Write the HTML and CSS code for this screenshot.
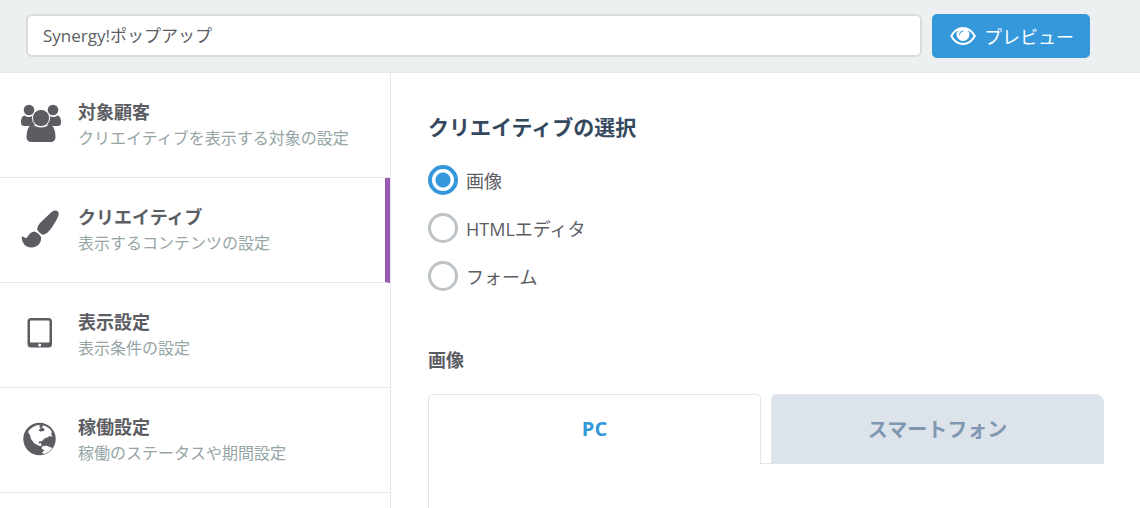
FILE: index.html
```html
<!DOCTYPE html>
<html lang="ja">
<head>
  <meta charset="UTF-8" />
  <meta name="viewport" content="width=device-width, initial-scale=1.0" />
  <title>Synergy!ポップアップ</title>
  <link rel="stylesheet" href="styles.css">
</head>
<body>
  <header class="topbar">
    <input type="text" class="name-input" aria-label="ポップアップ名" value="Synergy!ポップアップ" />
    <button type="button" class="preview-button">
      <svg class="eye" viewBox="0 0 26 18" aria-hidden="true">
        <path fill-rule="evenodd" d="M13 0Q21 0 26 9Q21 18 13 18Q5 18 0 9Q5 0 13 0zM13 2Q6 2.500 2.500 9Q6 15.500 13 16Q20 15.500 23.500 9Q20 2.500 13 2z"/>
        <circle cx="13" cy="7.500" r="6.500"/>
        <path class="glint" d="M9.500 7.500Q9.500 4 13 4"/>
      </svg>
      プレビュー
    </button>
  </header>

  <div class="container">
    <nav class="sidebar">
      <a href="#target" class="step">
        <svg class="step-icon" viewBox="0 0 40 40" aria-hidden="true">
          <circle cx="8" cy="6" r="5.300"/>
          <circle cx="32" cy="6" r="5.300"/>
          <path d="M3.500 11.500Q8 14.500 12 11.500L15 20.500Q11.500 20.700 9.500 22H3.500Q0 22 0 18.500Q0 12 3.500 11.500zM36.500 11.500Q32 14.500 28 11.500L25 20.500Q28.500 20.700 30.500 22H36.500Q40 22 40 18.500Q40 12 36.500 11.500z"/>
          <path d="M11.500 20.500Q20 26.500 28.500 20.500Q34.500 22 34.500 33Q34.500 38 29.500 38H10.500Q5.500 38 5.500 33Q5.500 22 11.500 20.500z"/>
          <circle class="head" cx="20" cy="14" r="8.600"/>
        </svg>
        <span class="step-text">
          <strong>対象顧客</strong>
          <small>クリエイティブを表示する対象の設定</small>
        </span>
      </a>
      <a href="#creative" class="step active" aria-current="step">
        <svg class="step-icon" viewBox="0 0 40 40" aria-hidden="true">
          <path d="M34 1.500Q38.500 1.500 37.500 6.500Q35 13 29 21Q26 25 22 26Q18.500 24.500 16 20.500Q16 17.500 19 14L30 3.500Q32 1.500 34 1.500z"/>
          <path d="M13.500 22.500Q18 24 20.300 28.500Q20 37.500 10.500 38.500Q1 38 .5 27.500Q2 27 4.500 29Q6 29.500 7 27Q9.500 22.800 13.500 22.500z"/>
        </svg>
        <span class="step-text">
          <strong>クリエイティブ</strong>
          <small>表示するコンテンツの設定</small>
        </span>
      </a>
      <a href="#display" class="step">
        <svg class="step-icon" viewBox="0 0 40 40" aria-hidden="true">
          <path fill-rule="evenodd" d="M10 4H27.500Q31 4 31 7.500V30Q31 33.500 27.500 33.500H10Q6.500 33.500 6.500 30V7.500Q6.500 4 10 4zM10 6.500Q9 6.500 9 7.500V27.500Q9 28.500 10 28.500H27.500Q28.500 28.500 28.500 27.500V7.500Q28.500 6.500 27.500 6.500zM18.700 29.500A1.500 1.500 0 1 0 18.700 32.500A1.500 1.500 0 1 0 18.700 29.500z"/>
        </svg>
        <span class="step-text">
          <strong>表示設定</strong>
          <small>表示条件の設定</small>
        </span>
      </a>
      <a href="#schedule" class="step">
        <svg class="step-icon" viewBox="0 0 40 40" aria-hidden="true">
          <circle cx="18.500" cy="20" r="16.200"/>
          <path class="land" d="M8 11.500Q11 7.500 16.500 6L19.500 6.500L18 8L20 9L17.500 11L19.500 12.500L23 12L23.500 10L21 8.500L22 6.500Q28 7.500 31 13L30 15L31.500 18L29 17L26 18.500L23.500 19.500L20.500 22.500L18.500 22L17.500 24.500L20 24L20.500 27L18.500 27L13.500 24.500L10 20L9 16L7 13z"/>
          <path class="land" d="M21 27.500L25 26.500L31.500 29Q28 34 22.500 35L21 33.500L23.500 31.500L20.500 29.500z"/>
        </svg>
        <span class="step-text">
          <strong>稼働設定</strong>
          <small>稼働のステータスや期間設定</small>
        </span>
      </a>
    </nav>

    <main>
      <fieldset class="creative-type">
        <legend>クリエイティブの選択</legend>
        <label><input type="radio" name="type" checked />画像</label>
        <label><input type="radio" name="type" />HTMLエディタ</label>
        <label><input type="radio" name="type" />フォーム</label>
      </fieldset>

      <h3>画像</h3>
      <div class="tabs" role="tablist">
        <button type="button" class="tab selected" role="tab" aria-selected="true">PC</button>
        <span class="tab-gap"></span>
        <button type="button" class="tab" role="tab" aria-selected="false">スマートフォン</button>
      </div>
      <div class="tab-panel" role="tabpanel" aria-label="PC"></div>
    </main>
  </div>
</body>
</html>
```

FILE: styles.css
```css
* {
  box-sizing: border-box;
}
body {
  font-family: 'Open Sans', 'Noto Sans CJK JP', sans-serif;
  font-size: 18px;
  color: #5b5d63;
  background: #fff;
  margin: 0;
  height: 100vh;
  overflow: hidden;
  display: flex;
  flex-direction: column;
}
input,
button {
  font: inherit;
}
.topbar {
  display: flex;
  gap: 10px;
  padding: 14px 50px 14px 26px;
  background: #ecf0f1;
  border-bottom: 1px solid #e6e8ea;
}
.name-input {
  flex: 1;
  min-width: 0;
  height: 43px;
  padding: 0 15px 2px;
  font-size: 17px;
  color: #5b5d63;
  background: #fff;
  border: 2px solid #d9dbdc;
  border-radius: 6px;
}
.preview-button {
  display: flex;
  align-items: center;
  justify-content: center;
  gap: 8px;
  width: 158px;
  height: 44px;
  padding: 0 0 0 2px;
  color: #fff;
  background: #3498db;
  border: none;
  border-radius: 5px;
  cursor: pointer;
}
.eye {
  width: 26px;
  height: 18px;
  fill: #fff;
}
.eye .glint {
  fill: none;
  stroke: #3498db;
  stroke-linecap: round;
}
.container {
  display: flex;
  flex: 1;
  min-height: 0;
}
.sidebar {
  flex: 0 0 391px;
  border-right: 1px solid #e6eaec;
}
.step {
  display: flex;
  align-items: center;
  gap: 17px;
  height: 105px;
  padding-left: 21px;
  color: inherit;
  text-decoration: none;
  border-bottom: 1px solid #e6e8ea;
}
.step.active {
  border-right: 5px solid #9b59b6;
}
.step-icon {
  width: 40px;
  height: 40px;
  margin-bottom: 2px;
  fill: #5b5d63;
}
.step-icon .head {
  stroke: #fff;
}
.step-icon .land {
  fill: #fff;
}
.step-text strong,
.step-text small {
  display: block;
  line-height: 26px;
}
.step-text small {
  font-size: 16px;
  color: #95a5a6;
}
main {
  flex: 1;
  display: flex;
  flex-direction: column;
  min-width: 0;
  padding: 38px 36px 0 37px;
}
.creative-type {
  margin: 0;
  padding: 0;
  border: none;
}
.creative-type legend {
  margin-bottom: 13px;
  padding: 0;
  font-size: 21px;
  font-weight: bold;
  line-height: 32px;
  color: #34495e;
}
.creative-type label {
  display: flex;
  align-items: center;
  gap: 8px;
  height: 48px;
}
.creative-type input {
  appearance: none;
  width: 30px;
  height: 30px;
  margin: 0;
  border: 3px solid #bdc3c7;
  border-radius: 50%;
}
.creative-type input:checked {
  border: 4px solid #3498db;
  background: radial-gradient(circle, #3498db 7px, #fff 8px);
}
h3 {
  margin: 47px 0 21px;
  font-size: 18px;
  line-height: 26px;
}
.tabs {
  display: flex;
}
.tab {
  flex: 1;
  height: 70px;
  padding: 0 0 2px;
  font-size: 20px;
  font-weight: bold;
  color: #7f97b0;
  background: #dce3eb;
  border: 1px solid #e0e6ed;
  border-radius: 5px 8px 0 0;
  cursor: pointer;
}
.tab.selected {
  color: #3498db;
  background: #fff;
  border-bottom: none;
  border-radius: 5px 5px 0 0;
}
.tab-gap {
  width: 10px;
  border-bottom: 1px solid #e0e6ed;
}
.tab-panel {
  flex: 1;
  border-left: 1px solid #e0e6ed;
}
```
